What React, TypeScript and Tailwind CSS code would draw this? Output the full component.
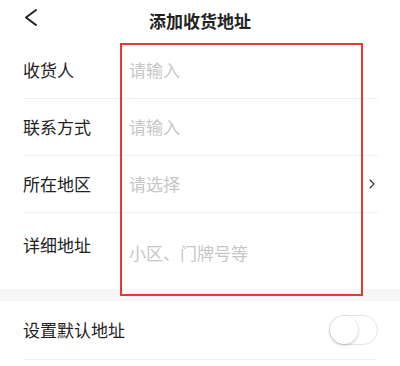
import { ChevronRight } from "lucide-react";

const font = {
  fontFamily: '"Noto Sans CJK SC", "Noto Sans", sans-serif',
};

const Row = ({ label, placeholder, arrow }: { label: string; placeholder: string; arrow?: boolean }) => (
  <div className="flex h-[57px] items-center border-b border-[#f0f0f0]">
    <span className="w-[106px] shrink-0 text-[17px] text-[#222]">{label}</span>
    <input
      className="min-w-0 flex-1 bg-transparent text-[17px] outline-none placeholder:text-[#c6c6c6]"
      placeholder={placeholder}
      readOnly={arrow}
    />
    {arrow && <ChevronRight className="mr-[-2px] h-4 w-4 text-[#333]" strokeWidth={1.6} />}
  </div>
);

export default function App() {
  return (
    <div className="relative h-[366px] w-[400px] overflow-hidden bg-white" style={font}>
      <header className="relative flex h-[42px] items-center justify-center">
        <svg className="absolute left-[23px] top-[8px]" width="16" height="19" viewBox="0 0 16 19" fill="none">
          <polyline points="13,2 3,9.5 13,17" stroke="#222" strokeWidth="2" strokeLinecap="round" strokeLinejoin="round" />
        </svg>
        <h1 className="text-[17px] font-bold text-[#222]">添加收货地址</h1>
      </header>

      <div className="pl-[23px] pr-[22px]">
        <Row label="收货人" placeholder="请输入" />
        <Row label="联系方式" placeholder="请输入" />
        <Row label="所在地区" placeholder="请选择" arrow />
        <div className="flex h-[76px] items-start pt-[19px]">
          <span className="w-[106px] shrink-0 text-[17px] text-[#222]">详细地址</span>
          <textarea
            className="mt-[9px] h-[40px] min-w-0 flex-1 resize-none bg-transparent text-[17px] leading-[24px] outline-none placeholder:text-[#c6c6c6]"
            placeholder="小区、门牌号等"
          />
        </div>
      </div>

      <div className="h-[12px] bg-[#f6f6f6]" />

      <div className="mx-[23px] flex h-[59px] items-center justify-between border-b border-[#f0f0f0]">
        <span className="text-[17px] text-[#222]">设置默认地址</span>
        <button className="mr-[-1px] flex h-[30px] w-[49px] items-center rounded-full border border-[#e4e4e4] bg-white">
          <span className="h-[28px] w-[28px] rounded-full bg-white shadow-[0_1px_3px_rgba(0,0,0,0.25)]" />
        </button>
      </div>

      <div className="pointer-events-none absolute left-[120px] top-[43px] h-[253px] w-[243px] border-2 border-[#e53935]" />
    </div>
  );
}
